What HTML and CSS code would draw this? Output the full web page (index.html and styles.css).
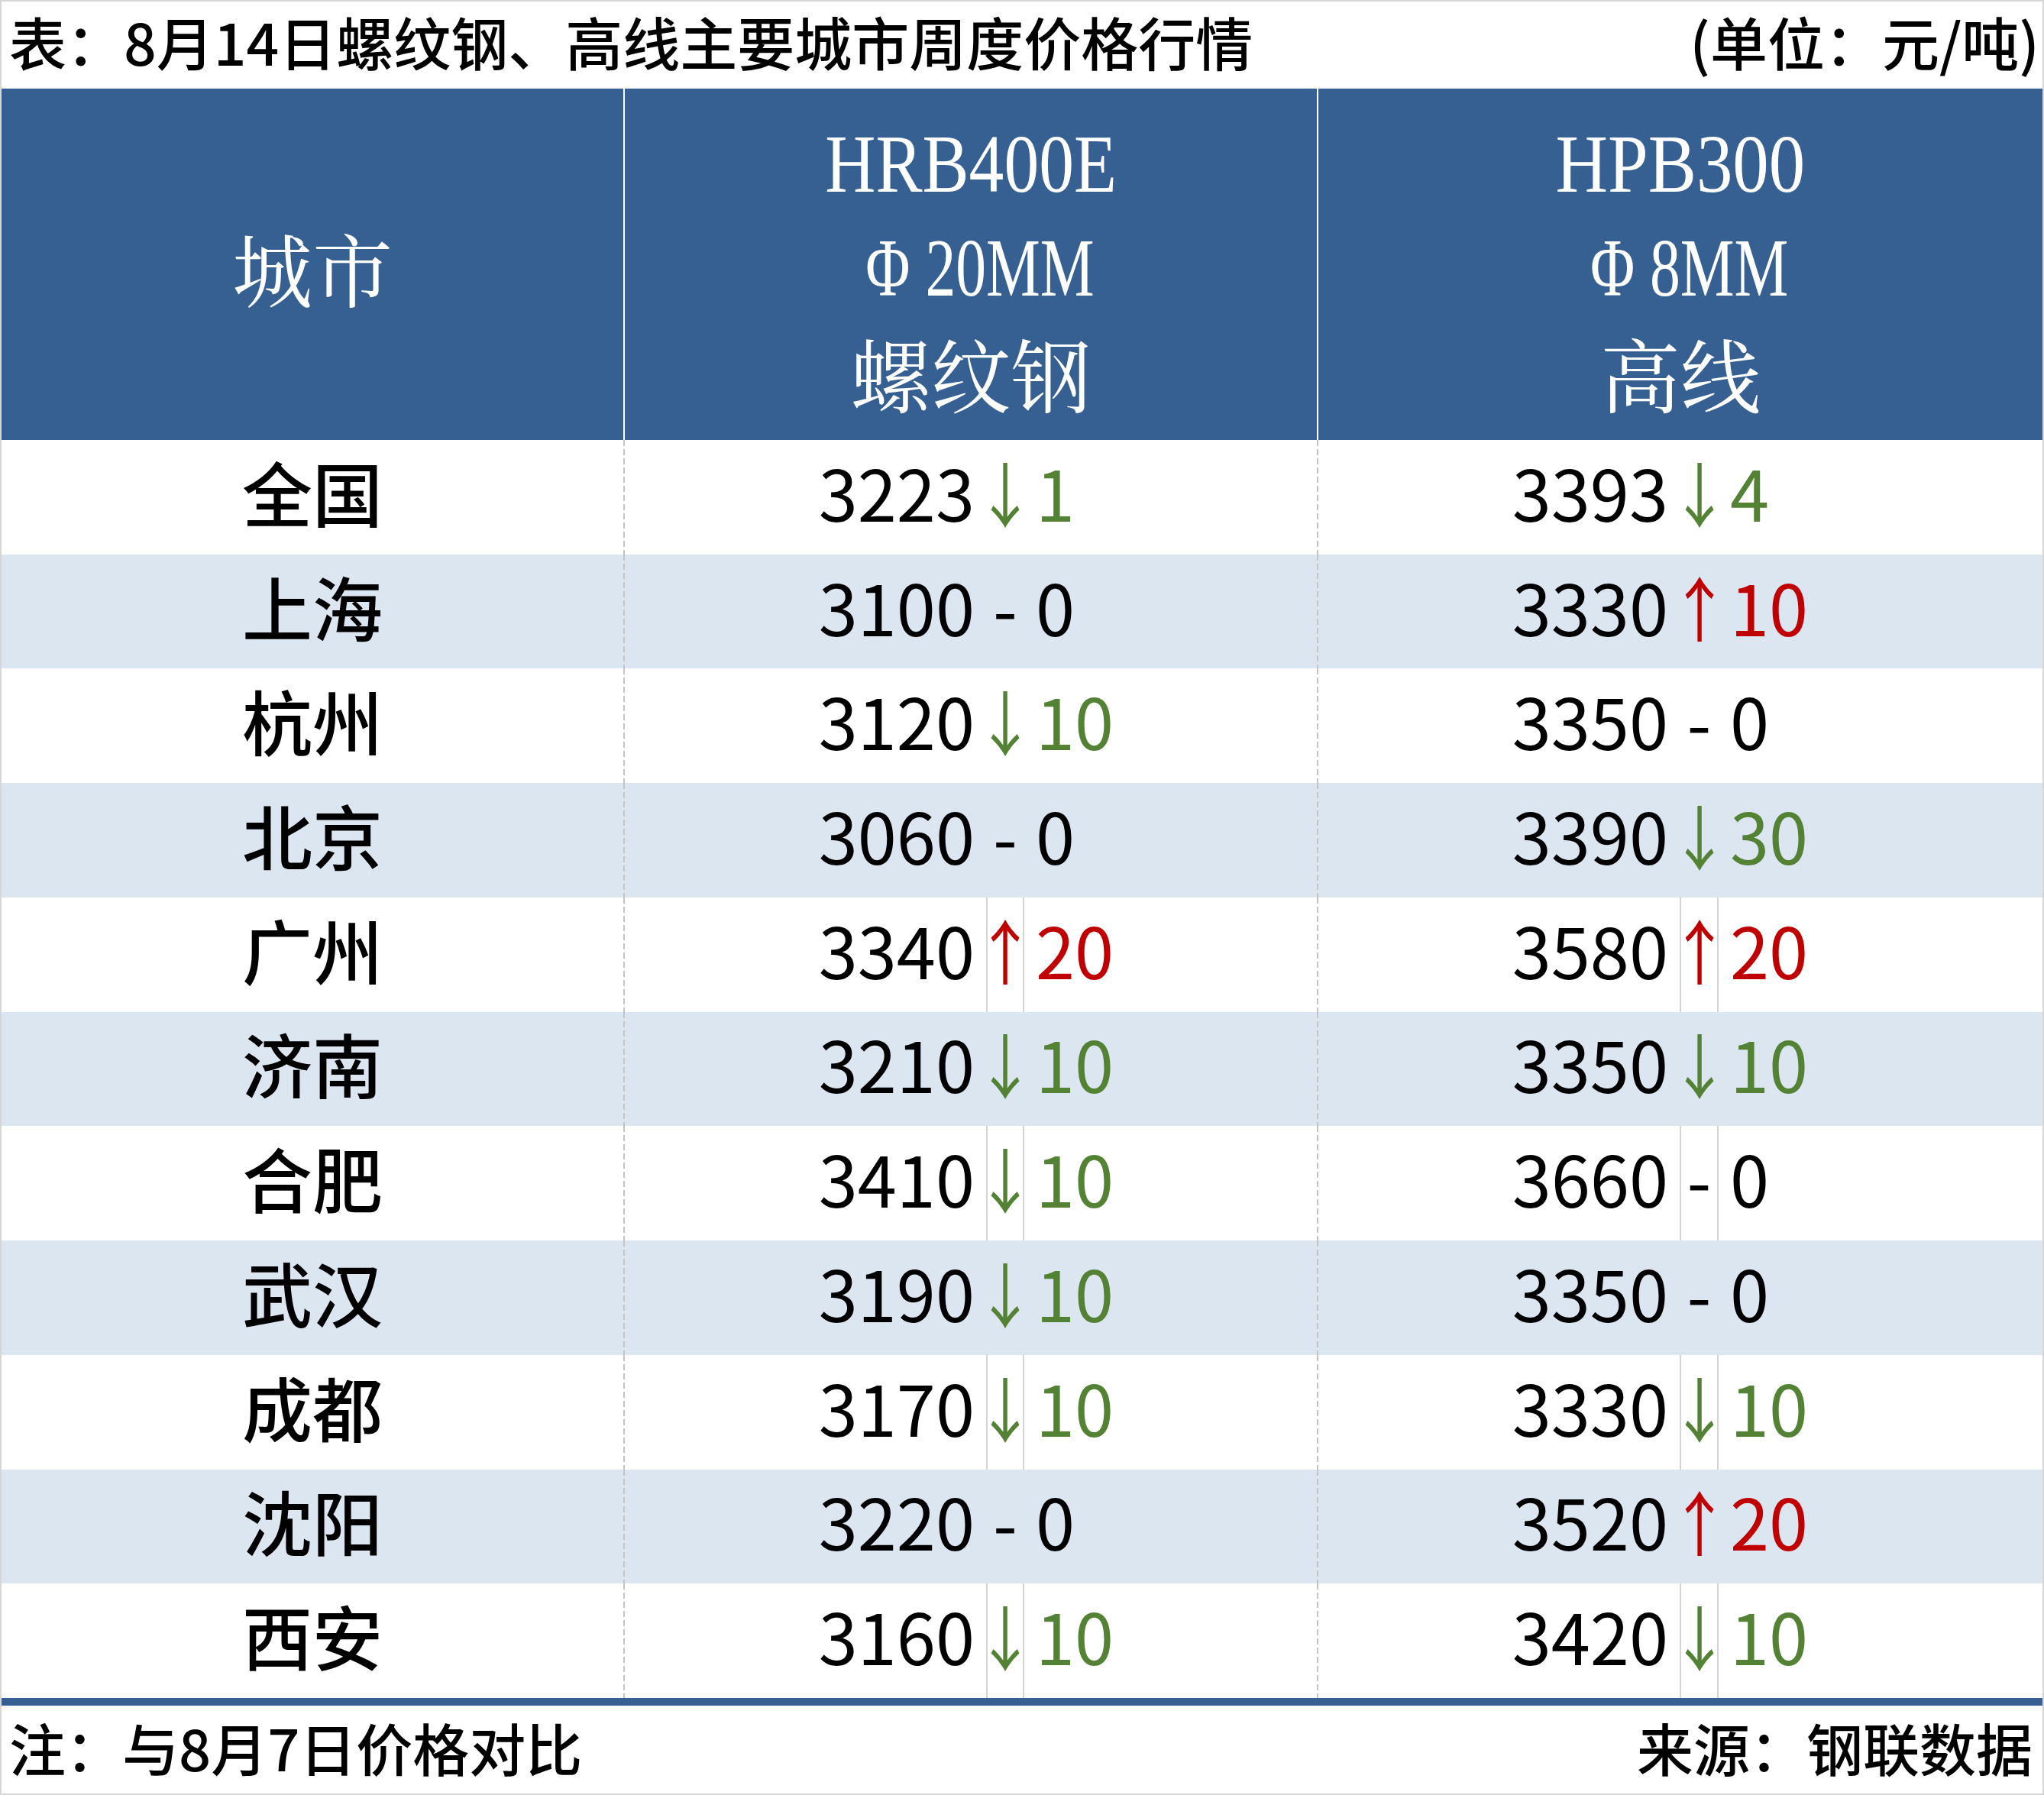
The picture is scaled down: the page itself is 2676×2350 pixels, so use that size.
FILE: index.html
```html
<!DOCTYPE html>
<html lang="zh-CN">
<head>
<meta charset="utf-8">
<title>8月14日螺纹钢、高线主要城市周度价格行情</title>
<link rel="stylesheet" href="styles.css">
</head>
<body>
<div class="sheet">
  <div class="title-row">
    <span class="title">表：8月14日螺纹钢、高线主要城市周度价格行情</span>
    <span class="unit">(单位：元/吨)</span>
  </div>

  <div class="head">
    <div class="hcell hcity">城市</div>
    <div class="hcell hspec">
      <div class="hline"><span class="latin grade">HRB400E</span></div>
      <div class="hline shift"><span class="latin dia"><span class="phi">Φ</span>20MM</span></div>
      <div class="hline cjk">螺纹钢</div>
    </div>
    <div class="hcell hspec">
      <div class="hline"><span class="latin grade g3">HPB300</span></div>
      <div class="hline shift"><span class="latin dia"><span class="phi">Φ</span>8MM</span></div>
      <div class="hline cjk">高线</div>
    </div>
  </div>

  <div class="rows">
    <div class="row">
      <div class="city">全国</div>
      <div class="price p2"><div class="v">3223</div><div class="a down"><span class="arr">↓</span></div><div class="c down">1</div></div>
      <div class="price p3"><div class="v">3393</div><div class="a down"><span class="arr">↓</span></div><div class="c down">4</div></div>
    </div>
    <div class="row alt">
      <div class="city">上海</div>
      <div class="price p2"><div class="v">3100</div><div class="a">-</div><div class="c">0</div></div>
      <div class="price p3"><div class="v">3330</div><div class="a up"><span class="arr">↑</span></div><div class="c up">10</div></div>
    </div>
    <div class="row">
      <div class="city">杭州</div>
      <div class="price p2"><div class="v">3120</div><div class="a down"><span class="arr">↓</span></div><div class="c down">10</div></div>
      <div class="price p3"><div class="v">3350</div><div class="a">-</div><div class="c">0</div></div>
    </div>
    <div class="row alt">
      <div class="city">北京</div>
      <div class="price p2"><div class="v">3060</div><div class="a">-</div><div class="c">0</div></div>
      <div class="price p3"><div class="v">3390</div><div class="a down"><span class="arr">↓</span></div><div class="c down">30</div></div>
    </div>
    <div class="row lined">
      <div class="city">广州</div>
      <div class="price p2"><div class="v">3340</div><div class="a up"><span class="arr">↑</span></div><div class="c up">20</div></div>
      <div class="price p3"><div class="v">3580</div><div class="a up"><span class="arr">↑</span></div><div class="c up">20</div></div>
    </div>
    <div class="row alt">
      <div class="city">济南</div>
      <div class="price p2"><div class="v">3210</div><div class="a down"><span class="arr">↓</span></div><div class="c down">10</div></div>
      <div class="price p3"><div class="v">3350</div><div class="a down"><span class="arr">↓</span></div><div class="c down">10</div></div>
    </div>
    <div class="row lined">
      <div class="city">合肥</div>
      <div class="price p2"><div class="v">3410</div><div class="a down"><span class="arr">↓</span></div><div class="c down">10</div></div>
      <div class="price p3"><div class="v">3660</div><div class="a">-</div><div class="c">0</div></div>
    </div>
    <div class="row alt">
      <div class="city">武汉</div>
      <div class="price p2"><div class="v">3190</div><div class="a down"><span class="arr">↓</span></div><div class="c down">10</div></div>
      <div class="price p3"><div class="v">3350</div><div class="a">-</div><div class="c">0</div></div>
    </div>
    <div class="row lined">
      <div class="city">成都</div>
      <div class="price p2"><div class="v">3170</div><div class="a down"><span class="arr">↓</span></div><div class="c down">10</div></div>
      <div class="price p3"><div class="v">3330</div><div class="a down"><span class="arr">↓</span></div><div class="c down">10</div></div>
    </div>
    <div class="row alt">
      <div class="city">沈阳</div>
      <div class="price p2"><div class="v">3220</div><div class="a">-</div><div class="c">0</div></div>
      <div class="price p3"><div class="v">3520</div><div class="a up"><span class="arr">↑</span></div><div class="c up">20</div></div>
    </div>
    <div class="row lined">
      <div class="city">西安</div>
      <div class="price p2"><div class="v">3160</div><div class="a down"><span class="arr">↓</span></div><div class="c down">10</div></div>
      <div class="price p3"><div class="v">3420</div><div class="a down"><span class="arr">↓</span></div><div class="c down">10</div></div>
    </div>
  </div>

  <div class="rule"></div>

  <div class="foot-row">
    <span class="note">注：与8月7日价格对比</span>
    <span class="source">来源：钢联数据</span>
  </div>
</div>
</body>
</html>
```

FILE: styles.css
```css
html, body {
  margin: 0;
  padding: 0;
  background: #ffffff;
}

.sheet {
  width: 2676px;
  height: 2350px;
  box-sizing: border-box;
  border: 2px solid #d6d6d6;
  background: #ffffff;
  display: flex;
  flex-direction: column;
  overflow: hidden;
  font-family: "Noto Sans CJK SC", "Noto Sans", sans-serif;
  color: #000000;
}

/* ---------- title ---------- */
.title-row {
  flex: none;
  height: 114px;
  box-sizing: border-box;
  display: flex;
  justify-content: space-between;
  align-items: center;
  padding: 0 4px 12px 10px;
  font-size: 75px;
  font-weight: 500;
  line-height: 1;
  white-space: nowrap;
}

/* ---------- header ---------- */
.head {
  flex: none;
  height: 460px;
  display: grid;
  grid-template-columns: 814px 908px 950px;
  background: #366092;
  color: #ffffff;
}

.hcell + .hcell {
  border-left: 2px solid #ffffff;
}

.hcity {
  display: flex;
  align-items: center;
  justify-content: center;
  padding-top: 4px;
  box-sizing: border-box;
  font-family: "Noto Serif CJK SC", "Noto Sans CJK SC", serif;
  font-size: 105px;
  font-weight: 400;
}

.hspec {
  display: flex;
  flex-direction: column;
  align-items: center;
  padding-top: 31px;
  box-sizing: border-box;
}

.hline {
  height: 136px;
  line-height: 136px;
  text-align: center;
  white-space: nowrap;
}

.hline.shift {
  padding-left: 24px;
}

.latin {
  display: inline-block;
  font-family: "Liberation Serif", serif;
  font-size: 109px;
  font-weight: 400;
}

.grade {
  transform: scaleX(0.84);
}

.grade.g3 {
  transform: scaleX(0.87);
}

.dia {
  transform: scaleX(0.73);
}

.phi {
  margin-right: 0.25em;
}

.cjk {
  font-family: "Noto Serif CJK SC", "Noto Sans CJK SC", serif;
  font-size: 105px;
  font-weight: 400;
}

/* ---------- body rows ---------- */
.rows {
  flex: none;
  height: 1647px;
  display: grid;
  grid-template-rows: repeat(11, 1fr);
}

.row {
  display: grid;
  grid-template-columns: 814px 908px 950px;
  font-size: 92px;
  line-height: 1;
}

.row.alt {
  background: #dce6f1;
}

.city {
  display: flex;
  align-items: center;
  justify-content: center;
  padding-bottom: 16px;
  box-sizing: border-box;
  font-weight: 500;
}

.price {
  display: grid;
  background-image: linear-gradient(to bottom, #c4c4c4 0, #c4c4c4 8px, transparent 8px, transparent 12px);
  background-size: 2px 12px;
  background-repeat: repeat-y;
  background-position: left top;
}

.p2 {
  grid-template-columns: 475px 50px 1fr;
}

.p3 {
  grid-template-columns: 475px 51px 1fr;
}

.v,
.a,
.c {
  display: flex;
  align-items: center;
  padding-bottom: 16px;
  box-sizing: border-box;
}

.v {
  justify-content: flex-end;
  padding-right: 15px;
}

.a {
  justify-content: center;
}

.c {
  padding-left: 15px;
}

.arr {
  display: inline-block;
  transform: scaleX(0.86);
}

.lined .a {
  border-left: 2px solid #d4d4d4;
  border-right: 2px solid #d4d4d4;
}

.down {
  color: #548235;
}

.up {
  color: #c00000;
}

/* ---------- bottom ---------- */
.rule {
  flex: none;
  height: 10px;
  background: #366092;
}

.foot-row {
  flex: 1;
  display: flex;
  justify-content: space-between;
  align-items: center;
  padding: 0 13px 8px 10px;
  font-size: 74px;
  font-weight: 500;
  line-height: 1;
  white-space: nowrap;
}
```
